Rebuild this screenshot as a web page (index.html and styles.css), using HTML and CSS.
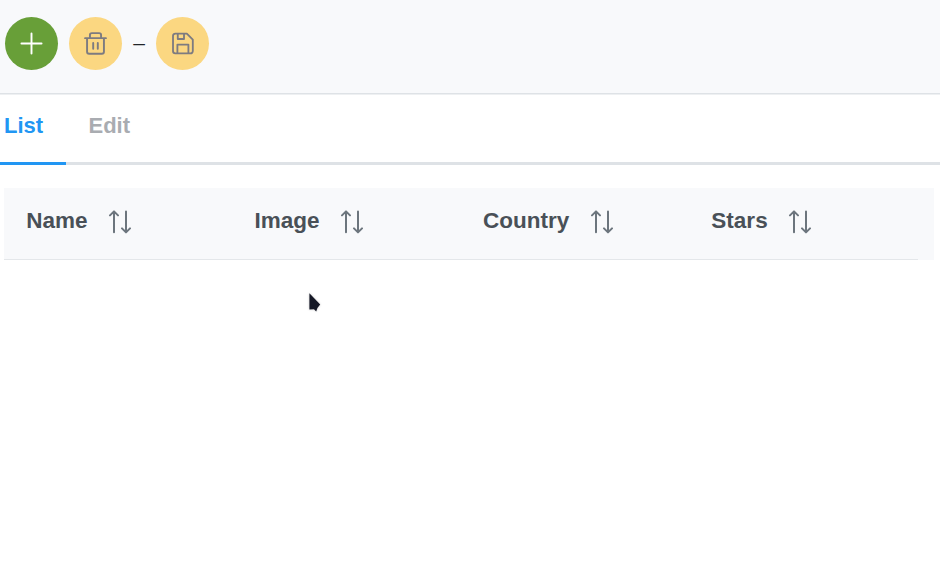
FILE: index.html
```html
<!DOCTYPE html>
<html lang="en">
<head>
<meta charset="utf-8">
<title>List</title>
<link rel="stylesheet" href="styles.css">
</head>
<body>
<svg class="defs" aria-hidden="true">
  <symbol id="sort" viewBox="0 0 24 24">
    <path d="M6 22.2V1.6M2 5.4 6 1.4 10 5.4M18 1.6V22M14 18.4 18 22.4 22 18.4"/>
  </symbol>
</svg>
<header class="toolbar">
  <button class="round add" aria-label="Add">
    <svg class="icon" viewBox="0 0 24 24"><path d="M12 1.5v21M1.5 12h21"/></svg>
  </button>
  <button class="round muted" aria-label="Delete">
    <svg class="icon" viewBox="0 0 24 24"><path d="M1.1 6.4h21.8M3.2 6.4v14.2a2.1 2.1 0 0 0 2.1 2.1h13.4a2.1 2.1 0 0 0 2.1-2.1V6.4M6.2 6.1V3.2a2 2 0 0 1 2-2h7.6a2 2 0 0 1 2 2v2.9M9.6 11.4v6.2M14.4 11.4v6.2"/></svg>
  </button>
  <span class="dash">–</span>
  <button class="round muted" aria-label="Save">
    <svg class="icon save" viewBox="0 0 24 24"><path d="M3.6 1.2h12.6l6.5 6.5v12.6a2.5 2.5 0 0 1-2.5 2.5H3.6a2.5 2.5 0 0 1-2.5-2.5V3.7a2.5 2.5 0 0 1 2.5-2.5M6.3 1.5v5.6h6.8V1.5M5.9 22.5v-9.3h12v9.3"/></svg>
  </button>
</header>
<nav class="tabs">
  <a class="tab active">List</a>
  <a class="tab">Edit</a>
</nav>
<main class="table">
  <div class="head">
    <div class="cell">Name<svg class="sort"><use href="#sort"/></svg></div>
    <div class="cell">Image<svg class="sort"><use href="#sort"/></svg></div>
    <div class="cell">Country<svg class="sort"><use href="#sort"/></svg></div>
    <div class="cell">Stars<svg class="sort"><use href="#sort"/></svg></div>
  </div>
</main>
<svg class="cursor" viewBox="0 0 18 26"><path d="M3.4 3.2v16.2l4.6-.2 2.2 2.4 1.2-3.6 2.8-3.4z"/></svg>
</body>
</html>
```
FILE: styles.css
```css
* { box-sizing: border-box; }
body {
  margin: 0;
  height: 581px;
  overflow: hidden;
  background: #fff;
  font-family: "Liberation Sans", Arial, sans-serif;
  font-size: 22.5px;
  color: #495057;
}
.defs { display: none; }
.toolbar {
  display: flex;
  align-items: center;
  height: 94px;
  padding: 1px 0 7px 5px;
  background: #f8f9fb;
  border-bottom: 1px solid #dee2e6;
  box-shadow: 0 1px #eef0f2;
}
.round {
  display: flex;
  align-items: center;
  justify-content: center;
  width: 53px;
  height: 53px;
  padding: 0;
  border: 0;
  border-radius: 50%;
}
.add { background: #689f38; color: #fff; margin-right: 11px; }
.muted { background: #fbd781; color: #7d7b80; }
.icon {
  width: 23px;
  height: 23px;
  fill: none;
  stroke: currentColor;
  stroke-width: 2;
  stroke-linecap: round;
  stroke-linejoin: round;
}
.save { width: 22px; }
.dash {
  width: 34px;
  padding-bottom: 2px;
  text-align: center;
  font-size: 21px;
  color: #212529;
}
.tabs {
  display: flex;
  height: 71px;
  border-bottom: 3px solid #dee2e6;
}
.tab {
  height: 71px;
  padding: 18px 22px 0 4px;
  font-size: 22px;
  font-weight: 700;
  line-height: 27px;
  color: #a9acb1;
}
.tab + .tab { padding-left: 22.5px; }
.active {
  width: 66px;
  border-bottom: 3px solid #2196f3;
  color: #2196f3;
}
.table {
  margin: 23px 6px 0 4px;
  height: 72px;
  background: #f8f9fb;
}
.head {
  display: grid;
  grid-template-columns: repeat(4, 228.4px);
  height: 72px;
  width: 913.6px;
  border-bottom: 1px solid #e4e7ea;
}
.cell {
  display: flex;
  align-items: center;
  padding: 0 0 5px 22.2px;
  font-weight: 700;
}
.sort {
  width: 24px;
  height: 24px;
  margin: 2px 0 0 20.4px;
  fill: none;
  stroke: #6c757d;
  stroke-width: 2;
  stroke-linecap: round;
  stroke-linejoin: round;
}
.cursor {
  position: absolute;
  left: 306px;
  top: 290px;
  width: 18px;
  height: 26px;
  fill: #151826;
  filter: drop-shadow(0 0 1px #c8c8c8);
}
```
